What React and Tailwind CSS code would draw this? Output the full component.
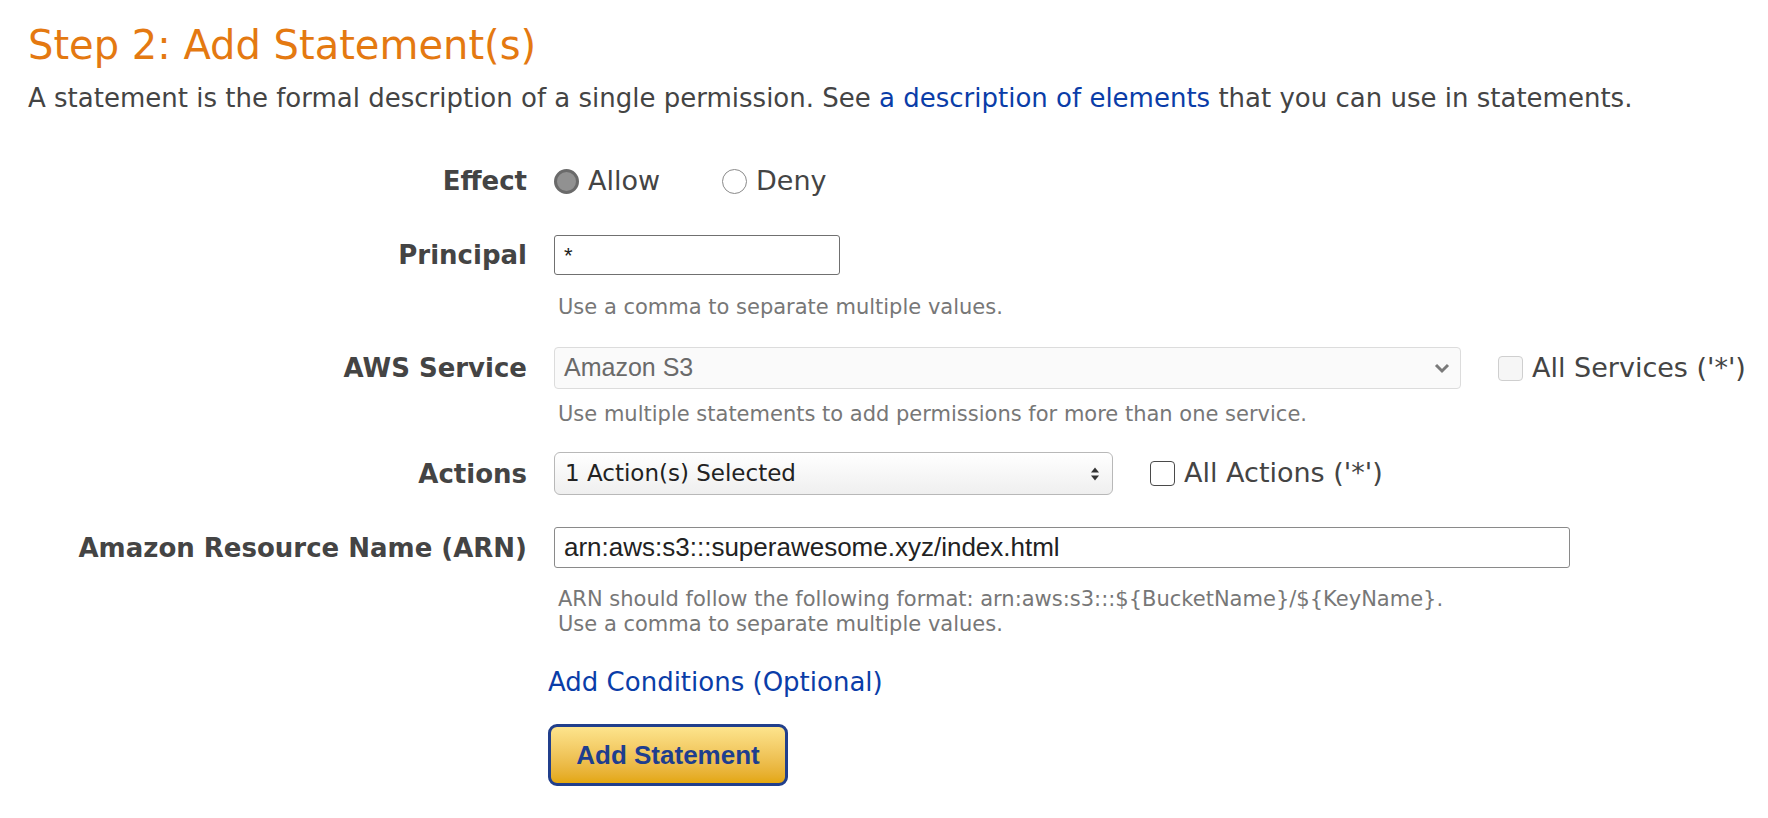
import React from "react";

const verdana = "font-['DejaVu_Sans',Verdana,sans-serif]";
const arial = "font-['Liberation_Sans',Arial,sans-serif]";

const Label = ({ children }) => (
  <div className={`${verdana} text-right text-[26px] leading-[30px] font-bold text-[#444]`}>
    {children}
  </div>
);

const Help = ({ children, className = "" }) => (
  <div className={`${verdana} pl-[4px] text-[21px] leading-[24px] text-[#777] ${className}`}>
    {children}
  </div>
);

const Radio = ({ checked }) =>
  checked ? (
    <span className="block h-[25px] w-[25px] shrink-0 rounded-full border-[3px] border-[#6a6a6a] bg-[#919191]" />
  ) : (
    <span className="block h-[25px] w-[25px] shrink-0 rounded-full border border-[#8a8a8a] bg-white" />
  );

const Checkbox = ({ disabled }) => (
  <span
    className={
      disabled
        ? "block h-[25px] w-[25px] shrink-0 rounded-[4px] border border-[#cfcfcf] bg-[#f6f6f6]"
        : "block h-[25px] w-[25px] shrink-0 rounded-[4px] border-[1.5px] border-[#4a4a4a] bg-white"
    }
  />
);

export default function App() {
  return (
    <div className="min-h-screen bg-white pt-[22px]">
      <h1 className={`${verdana} pl-[28px] text-[40px] leading-[46px] text-[#e47911]`}>
        Step 2: Add Statement(s)
      </h1>
      <p className={`${verdana} mt-[15px] pl-[28px] text-[26px] leading-[30px] text-[#444]`}>
        A statement is the formal description of a single permission. See{" "}
        <a className="text-[#0a3da8]">a description of elements</a> that you can use in
        statements.
      </p>

      <div className="mt-[53px] grid grid-cols-[527px_1fr] gap-x-[27px]">
        {/* Effect */}
        <Label>Effect</Label>
        <div className={`${verdana} flex h-[30px] items-center text-[27px] text-[#444]`}>
          <Radio checked />
          <span className="ml-[9px]">Allow</span>
          <span className="ml-[62px]">
            <Radio />
          </span>
          <span className="ml-[9px]">Deny</span>
        </div>

        {/* Principal */}
        <div className="mt-[39px] flex h-[40px] flex-col justify-center">
          <Label>Principal</Label>
        </div>
        <div className="mt-[39px]">
          <div className={`${arial} flex h-[40px] w-[286px] items-center rounded-[3px] border-[1.5px] border-[#707070] bg-white px-[9px] text-[22px] text-[#222]`}>
            *
          </div>
          <Help className="mt-[20px]">Use a comma to separate multiple values.</Help>
        </div>

        {/* AWS Service */}
        <div className="mt-[28px] flex h-[42px] flex-col justify-center">
          <Label>AWS Service</Label>
        </div>
        <div className="mt-[28px]">
          <div className="flex items-center">
            <div className={`${arial} flex h-[42px] w-[907px] items-center justify-between rounded-[4px] border border-[#dcdcdc] bg-[#fafafa] pl-[9px] pr-[10px] text-[25px] text-[#6a6a6a]`}>
              <span>Amazon S3</span>
              <svg width="16" height="12" viewBox="0 0 16 12">
                <path d="M2 3l6 6 6-6" fill="none" stroke="#7a7a7a" strokeWidth="3" />
              </svg>
            </div>
            <div className={`${verdana} ml-[37px] flex items-center text-[27px] text-[#444]`}>
              <Checkbox disabled />
              <span className="ml-[9px]">All Services ('*')</span>
            </div>
          </div>
          <Help className="mt-[13px]">
            Use multiple statements to add permissions for more than one service.
          </Help>
        </div>

        {/* Actions */}
        <div className="mt-[26px] flex h-[43px] flex-col justify-center">
          <Label>Actions</Label>
        </div>
        <div className="mt-[26px] flex items-center">
          <div className={`${verdana} flex h-[43px] w-[559px] items-center justify-between rounded-[6px] border border-[#b8b8b8] bg-gradient-to-b from-white to-[#efefef] pl-[10px] pr-[12px] text-[23px] text-[#222]`}>
            <span>1 Action(s) Selected</span>
            <svg width="10" height="16" viewBox="0 0 10 16">
              <path d="M1 6.5L5 1.5 9 6.5z" fill="#333" />
              <path d="M1 9.5L5 14.5 9 9.5z" fill="#333" />
            </svg>
          </div>
          <div className={`${verdana} ml-[37px] flex items-center text-[27px] text-[#444]`}>
            <Checkbox />
            <span className="ml-[9px]">All Actions ('*')</span>
          </div>
        </div>

        {/* ARN */}
        <div className="mt-[32px] flex h-[41px] flex-col justify-center">
          <Label>Amazon Resource Name (ARN)</Label>
        </div>
        <div className="mt-[32px]">
          <div className={`${arial} flex h-[41px] w-[1016px] items-center rounded-[3px] border-[1.5px] border-[#8a8a8a] bg-white px-[9px] text-[26px] text-[#222]`}>
            arn:aws:s3:::superawesome.xyz/index.html
          </div>
          <Help className="mt-[19px] leading-[25px]">
            ARN should follow the following format: arn:aws:s3:::${"{"}BucketName{"}"}/${"{"}KeyName{"}"}.
            <br />
            Use a comma to separate multiple values.
          </Help>
        </div>

        {/* Conditions + button */}
        <div />
        <div className="-ml-[6px]">
          <a className={`${verdana} mt-[30px] block text-[26px] leading-[30px] text-[#0a3da8]`}>
            Add Conditions (Optional)
          </a>
          <button
            className={`${arial} mt-[27px] flex h-[62px] w-[240px] items-center justify-center rounded-[9px] border-[3px] border-[#213f8c] bg-gradient-to-b from-[#fde48c] to-[#e3a70a] text-[26px] font-bold text-[#1e3e8e]`}
          >
            Add Statement
          </button>
        </div>
      </div>
    </div>
  );
}
